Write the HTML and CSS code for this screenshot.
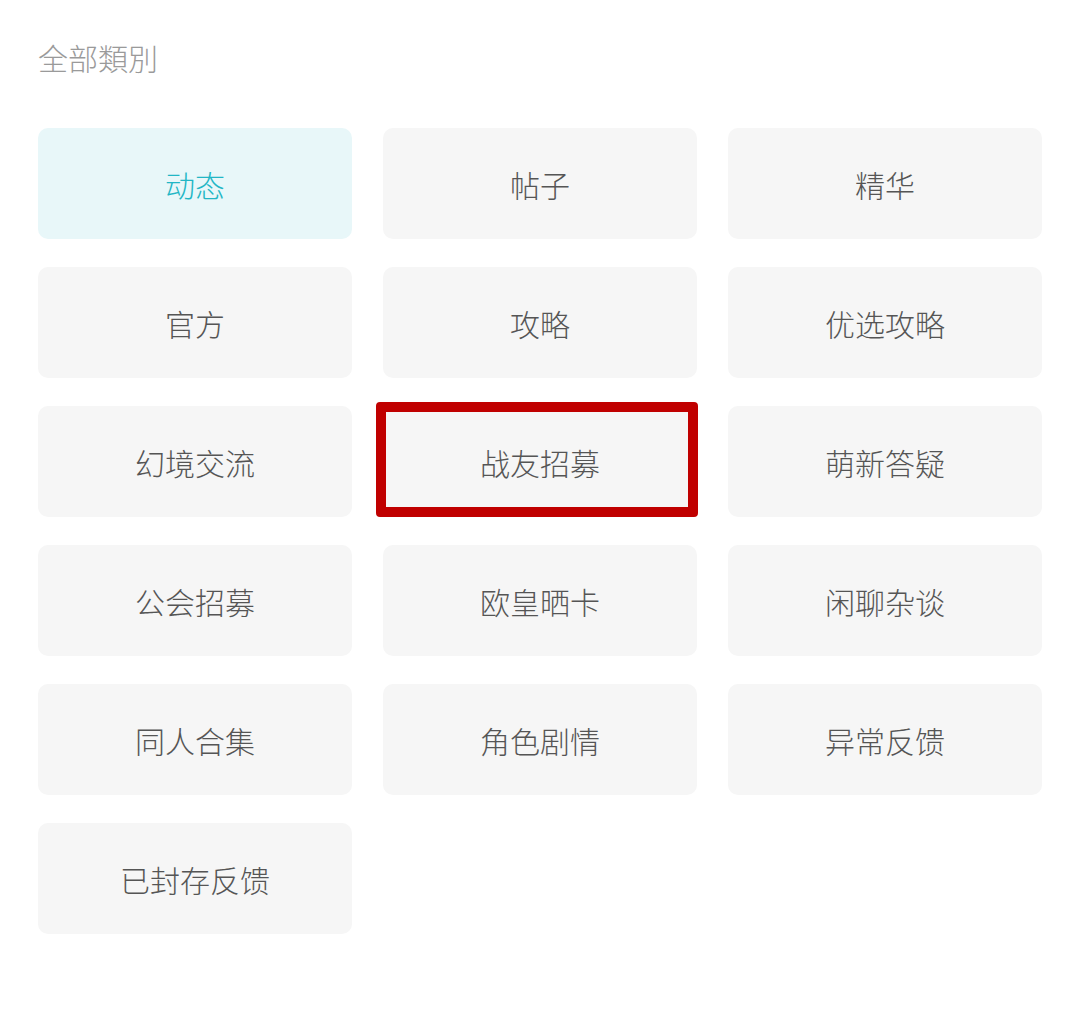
FILE: index.html
```html
<!DOCTYPE html>
<html lang="zh">
<head>
<meta charset="utf-8">
<title>全部類別</title>
<link rel="stylesheet" href="styles.css">
</head>
<body>
<div class="page">
  <div class="title">全部類別</div>
  <div class="grid">
    <div class="cell active">动态</div>
    <div class="cell">帖子</div>
    <div class="cell">精华</div>
    <div class="cell">官方</div>
    <div class="cell">攻略</div>
    <div class="cell">优选攻略</div>
    <div class="cell">幻境交流</div>
    <div class="cell marked">战友招募<span class="highlight"></span></div>
    <div class="cell">萌新答疑</div>
    <div class="cell">公会招募</div>
    <div class="cell">欧皇晒卡</div>
    <div class="cell">闲聊杂谈</div>
    <div class="cell">同人合集</div>
    <div class="cell">角色剧情</div>
    <div class="cell">异常反馈</div>
    <div class="cell">已封存反馈</div>
  </div>
</div>
</body>
</html>
```
FILE: styles.css
```css
html, body {
  margin: 0;
  padding: 0;
  background: #ffffff;
}
.page {
  padding: 37px 38px 0 38px;
  font-family: "Noto Sans CJK SC", "Noto Sans", sans-serif;
  font-weight: 300;
}
.title {
  font-size: 30px;
  line-height: 40px;
  height: 40px;
  color: #9a9a9a;
  margin-bottom: 51px;
}
.grid {
  display: grid;
  grid-template-columns: repeat(3, 314px);
  grid-auto-rows: 111px;
  column-gap: 31px;
  row-gap: 28px;
}
.cell {
  position: relative;
  background: #f6f6f6;
  border-radius: 10px;
  display: flex;
  align-items: center;
  justify-content: center;
  font-size: 30px;
  color: #555555;
}
.cell.active {
  background: #e8f7f9;
  color: #22b6c5;
}
.highlight {
  position: absolute;
  left: -7px;
  right: -1px;
  top: -4px;
  bottom: 0;
  border: 10px solid #c00000;
  border-radius: 4px;
}
```
